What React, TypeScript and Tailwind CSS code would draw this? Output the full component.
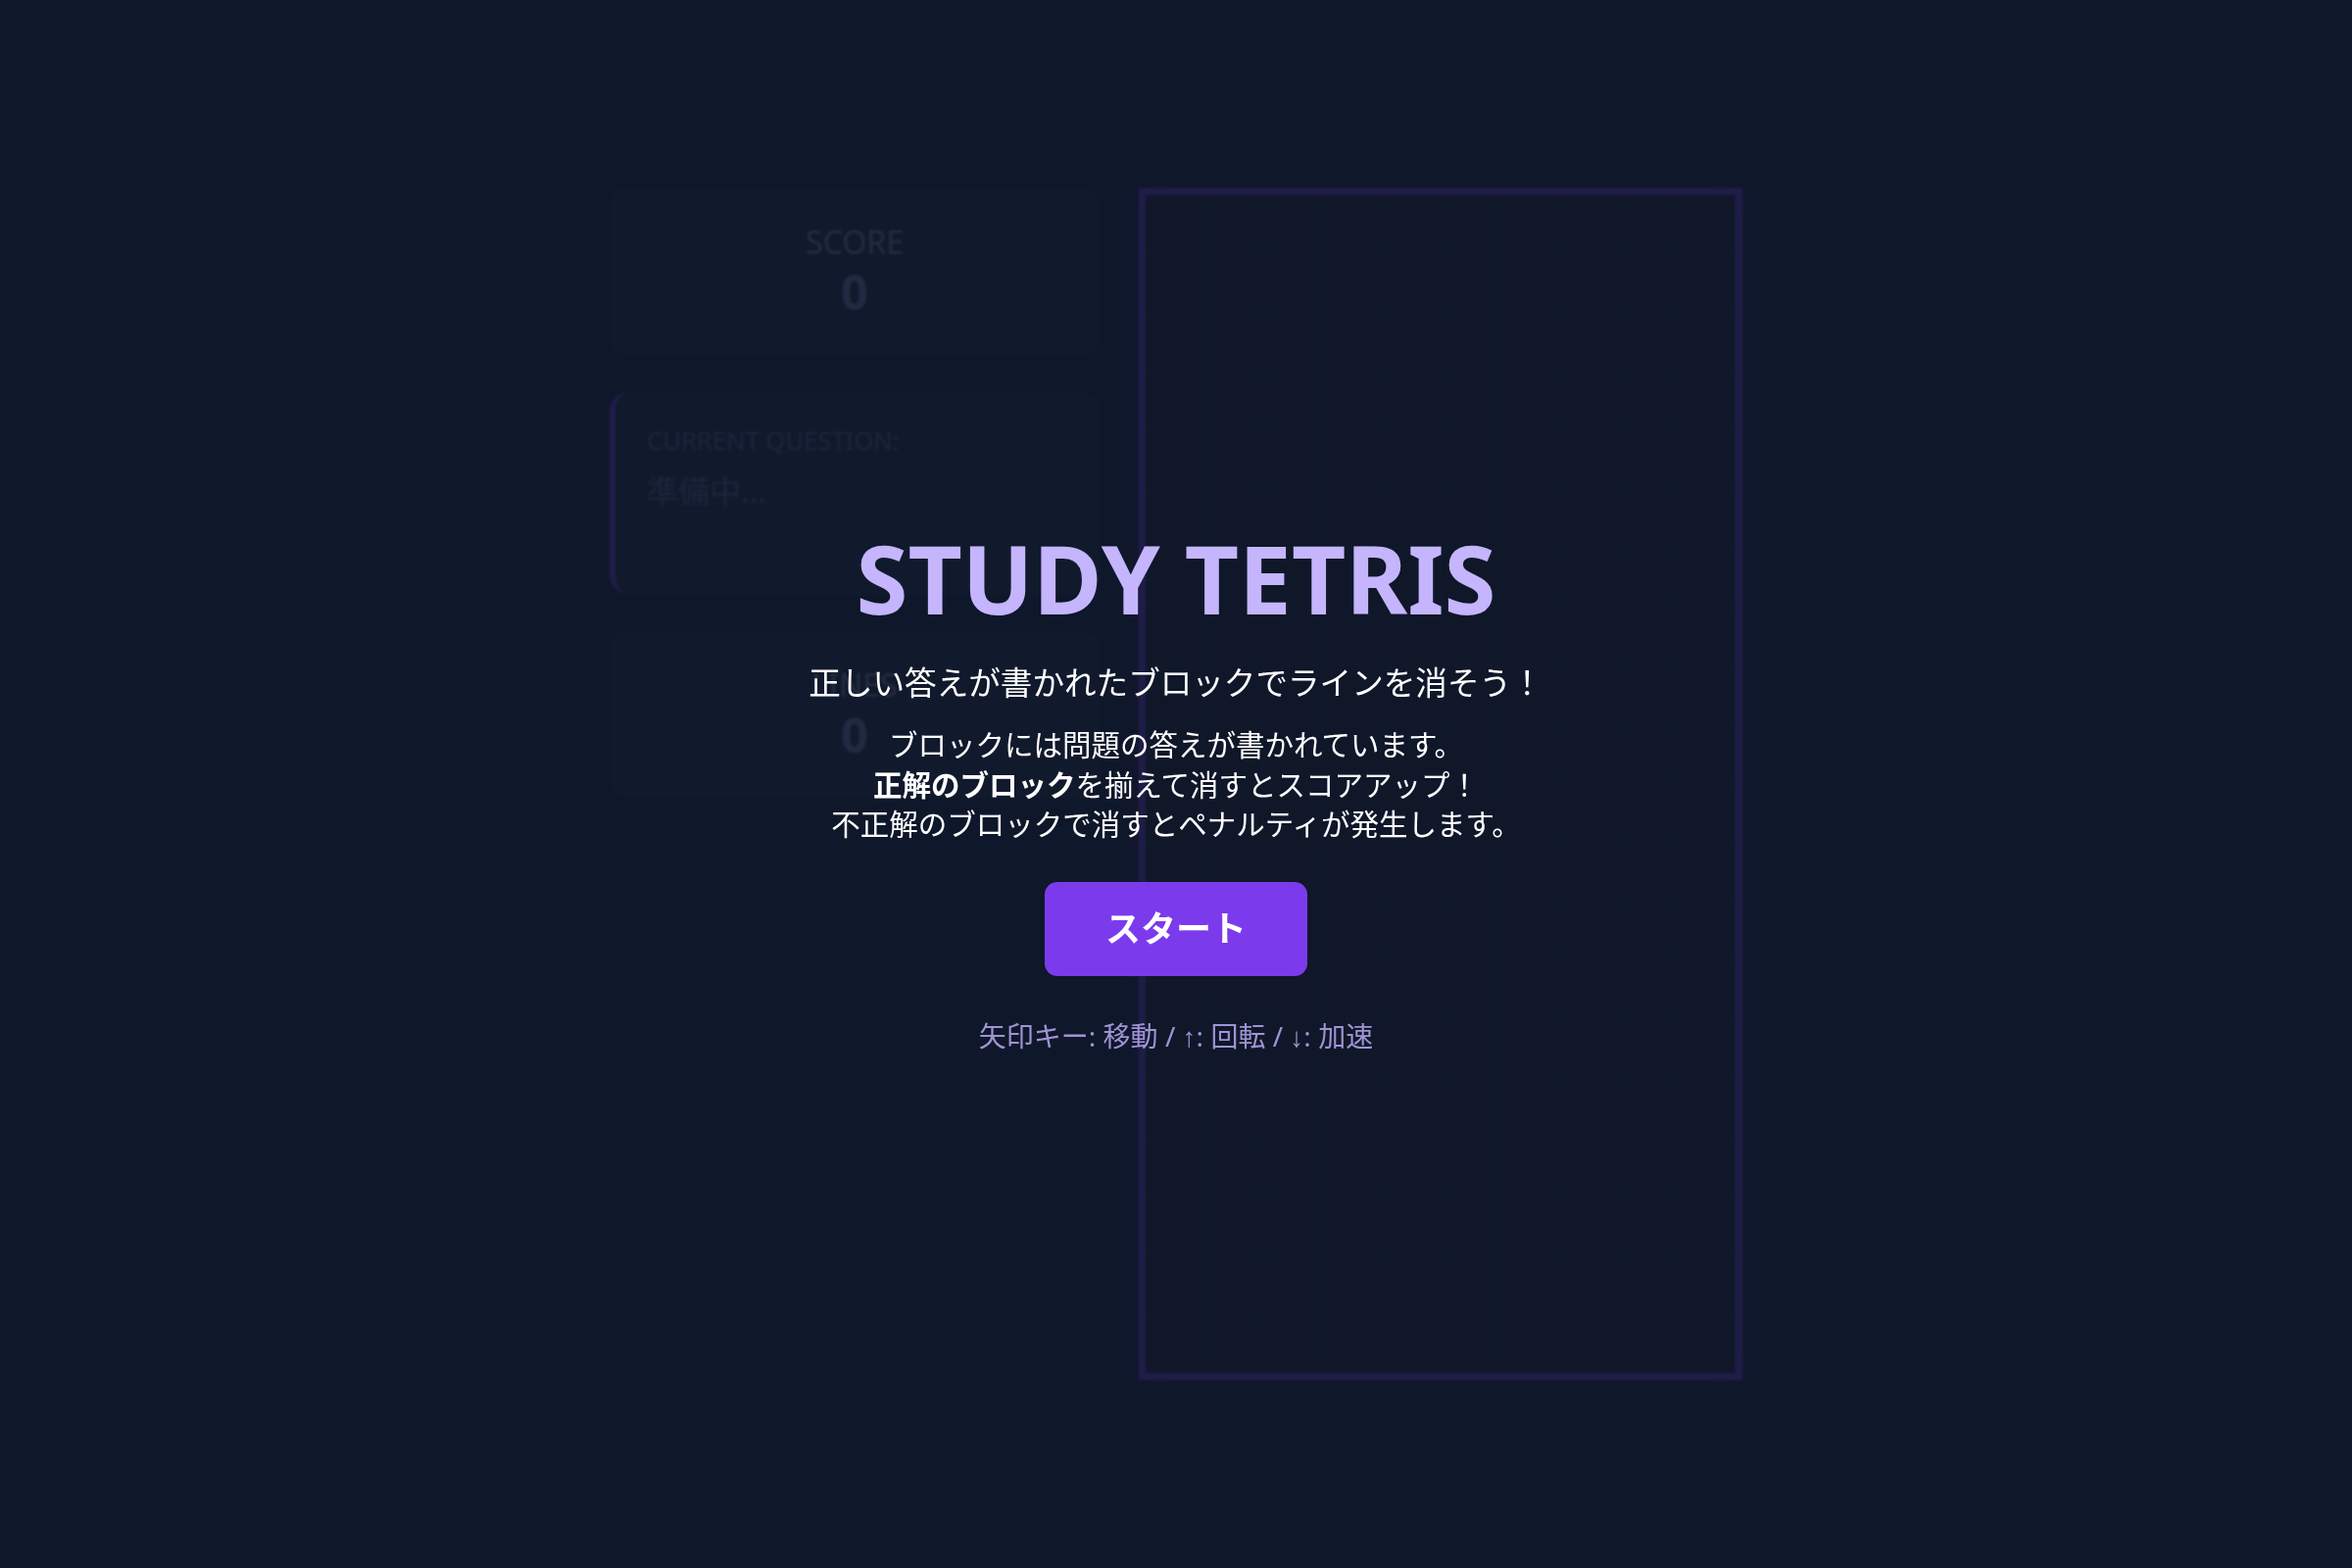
import React from 'react';

const COLS = 10;
const ROWS = 20;

const StatCard: React.FC<{ label: string; value: number }> = ({ label, value }) => (
  <div className="h-[170px] rounded-[19px] bg-[#1e293b] flex flex-col items-center justify-center">
    <div className="text-[32px] leading-[45px] text-slate-400 uppercase -mt-[4px]">{label}</div>
    <div className="text-[48px] leading-[58px] font-bold text-[#8b95c9]">{value}</div>
  </div>
);

const Board: React.FC = () => {
  const cells = Array.from({ length: COLS * ROWS });
  return (
    <div className="w-[616px] h-[1216px] border-[7px] border-[#7c3aed] bg-[#111827] shadow-[0_0_30px_rgba(124,58,237,0.25)] grid grid-cols-10 grid-rows-20">
      {cells.map((_, i) => (
        <div key={i} className="border-r border-b border-[#1e293b]" />
      ))}
    </div>
  );
};

const Arrow: React.FC<{ children: React.ReactNode }> = ({ children }) => (
  <span className="font-['Liberation_Sans',sans-serif]">{children}</span>
);

const StartOverlay: React.FC = () => (
  <div className="fixed inset-0 bg-[#0f172a]/85 backdrop-blur-[1px] flex flex-col items-center justify-center pt-[20px] text-center">
    <h1 className="text-[96px] leading-none font-bold text-[#c4b5fd] mb-[36px]">STUDY TETRIS</h1>
    <p className="text-[32.6px] leading-[45px] text-white mb-[21px]">正しい答えが書かれたブロックでラインを消そう！</p>
    <p className="text-[29.5px] leading-[40.5px] text-white mb-[38px]">
      ブロックには問題の答えが書かれています。
      <br />
      <span className="font-bold">正解のブロック</span>を揃えて消すとスコアアップ！
      <br />
      不正解のブロックで消すとペナルティが発生します。
    </p>
    <button className="bg-[#7c3aed] text-white font-bold text-[36px] leading-[51px] px-[62px] py-[22.4px] rounded-[12.8px]">
      スタート
    </button>
    <p className="mt-[42px] text-[28px] leading-[38px] text-[#a093d4]">
      矢印キー: 移動 / <Arrow>↑</Arrow>: 回転 / <Arrow>↓</Arrow>: 加速
    </p>
  </div>
);

export default function App() {
  return (
    <div className="relative min-h-screen bg-[#0f172a] flex items-center justify-center font-['Noto_Sans','Noto_Sans_CJK_JP',sans-serif]">
      <div className="flex gap-[40px]">
        {/* Left panel */}
        <div className="w-[500px] flex flex-col gap-[38px]">
          <StatCard label="Score" value={0} />
          <div className="h-[206px] rounded-[19px] bg-[#1e293b] border-l-[6px] border-[#7c3aed] pl-[32px] pr-[32px] pt-[31px]">
            <div className="text-[25.6px] leading-[38px] text-slate-500 uppercase mb-[9px]">Current Question:</div>
            <div className="text-[32px] leading-[45px] text-slate-500">準備中...</div>
          </div>
          <StatCard label="Lines" value={0} />
        </div>

        {/* Game board */}
        <Board />
      </div>

      <StartOverlay />
    </div>
  );
}
